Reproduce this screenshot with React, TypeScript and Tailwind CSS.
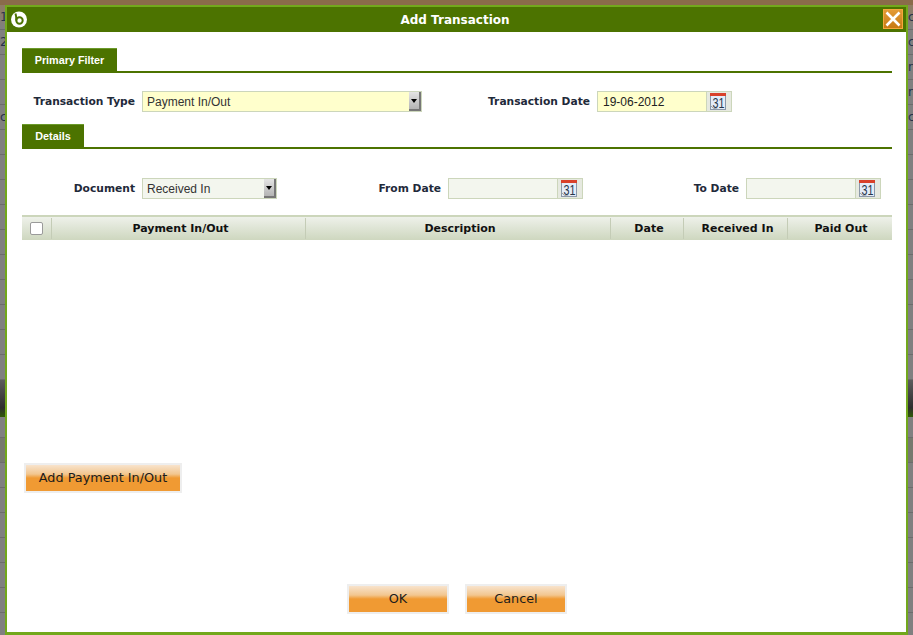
import React from 'react'

const label = "pt-[2px] font-['DejaVu_Sans',sans-serif] text-[10.7px] font-bold text-[#1f2a3a] whitespace-nowrap"

function CalendarIcon() {
  return (
    <svg width="18" height="19" viewBox="0 0 18 19">
      <rect x="1.5" y="2.5" width="15" height="15" fill="#e4ecf8" stroke="#8a97a8" />
      <rect x="1" y="1" width="16" height="3" fill="#d9412a" />
      <path d="M1.5 13.5 q2.5 4 7 3.5" fill="none" stroke="#9aa3ad" />
      <text x="9.5" y="16" textAnchor="middle" fontSize="15" fontFamily="'Liberation Sans', sans-serif" fill="#26364a" textLength="12" lengthAdjust="spacingAndGlyphs">31</text>
    </svg>
  )
}

function DateField({ value, width, bg }: { value?: string; width: string; bg: string }) {
  return (
    <div className={`flex h-[21px] border border-[#ccd6bb] ${width}`}>
      <div className={`flex-1 pl-[5px] font-['Liberation_Sans',sans-serif] text-xs leading-[20px] text-[#222] ${bg}`}>{value}</div>
      <div className="flex w-[25px] items-center justify-center border-l border-[#ccd6bb] bg-[#e6e9e0] pr-[2px]">
        <CalendarIcon />
      </div>
    </div>
  )
}

function SelectField({ value, width, bg }: { value: string; width: string; bg: string }) {
  return (
    <div className={`flex h-[21px] items-center border border-[#ccd6bb] pl-1 ${width} ${bg}`}>
      <span className="flex-1 font-['Liberation_Sans',sans-serif] text-xs text-[#333]">{value}</span>
      <div className="flex h-[19px] w-[12px] items-center justify-center border-r-2 border-b-2 border-[#777] bg-gradient-to-b from-[#e4e4e4] to-[#b4b4b4]">
        <div className="mt-px h-0 w-0 border-x-[3px] border-t-[4px] border-x-transparent border-t-black" />
      </div>
    </div>
  )
}

function Tab({ title, width }: { title: string; width: string }) {
  return (
    <div className="border-b-2 border-[#4c7300]">
      <div className={`flex h-[23px] items-center justify-center border-t border-[#6b9a2a] bg-[#4c7300] pt-px font-['Liberation_Sans',sans-serif] text-[10.8px] font-bold text-white ${width}`}>
        {title}
      </div>
    </div>
  )
}

function OrangeButton({ title, width }: { title: string; width: string }) {
  return (
    <button className={`h-[30px] border-2 border-[#eeeeee] bg-[linear-gradient(#f8e3cc_0%,#f2c68f_35%,#f09a33_50%,#f09a33_100%)] font-['DejaVu_Sans',sans-serif] text-[12.8px] text-[#1c1c1c] ${width}`}>
      {title}
    </button>
  )
}

function HeaderCell({ title, width }: { title: string; width: string }) {
  return (
    <div className={`flex h-[21px] items-center justify-center border-r border-[#c4ccb6] pl-1 pt-[2px] font-['DejaVu_Sans',sans-serif] text-[11px] font-bold text-[#111] ${width}`}>
      {title}
    </div>
  )
}

// rows of the page that shows at the edges, behind the dialog
const topRows = [0, 1, 2, 3, 4, 5, 6, 7, 8, 9, 10, 11, 12, 13, 14]
const bottomRows = [0, 1, 2, 3, 4, 5, 6]

function SideColumn({ texts, right }: { texts: string[]; right?: boolean }) {
  return (
    <div className="flex w-[5px] flex-col overflow-hidden">
      {topRows.map(i => (
        <div key={i} className={`h-[25px] shrink-0 overflow-hidden border-b border-[#6c6c6c] font-['DejaVu_Sans',sans-serif] text-xs leading-[24px] text-[#26324a] ${i === 0 ? 'bg-gradient-to-b from-[#8f7c62] to-[#808080]' : ''} ${right ? '' : 'text-right'}`}>
          {texts[i] ?? ''}
        </div>
      ))}
      <div className="h-[37px] shrink-0 bg-[linear-gradient(#5c5c5c_0%,#2e2e2e_75%,#2f5a05_100%)]" />
      <div className="h-[21px] shrink-0 border-b border-[#6c6c6c]" />
      {bottomRows.map(i => (
        <div key={i} className={`h-[25px] shrink-0 border-b border-[#6c6c6c] ${i === 0 ? 'bg-[#76796e]' : ''}`} />
      ))}
    </div>
  )
}

export default function App() {
  return (
    <div className="relative h-[635px] w-[913px] overflow-hidden bg-[#808080]">
      {/* page behind the dialog */}
      <div className="h-[5px] bg-[#8a6b4a]" />
      <div className="flex h-[630px] justify-between">
        <SideColumn texts={['1', '2', '', '', 'c']} />
        <SideColumn right texts={['c', 'c', 'n', 'n', 'c']} />
      </div>

      {/* dialog */}
      <div className="absolute left-[5px] top-[5px] h-[630px] w-[903px] border-x-2 border-t-2 border-b-[3px] border-[#72a81c] bg-white">
        <div className="relative flex h-[25px] items-center justify-center bg-[#4c7300] pr-[3px] font-['DejaVu_Sans',sans-serif] text-xs font-bold text-white">
          <svg className="absolute left-[3px] top-[3px]" width="18" height="18" viewBox="0 0 18 18">
            <circle cx="9" cy="9.5" r="8" fill="#fff" />
            <circle cx="9.5" cy="10.5" r="3.2" fill="none" stroke="#4c7300" strokeWidth="2" />
            <path d="M6.3 10.5 C6.3 7 6 5 5.5 3.5" fill="none" stroke="#4c7300" strokeWidth="2" />
          </svg>
          Add Transaction
          <div className="absolute right-[3px] top-[2px] flex h-[20px] w-[20px] items-center justify-center border border-[#f6a83c] bg-gradient-to-b from-[#e39a35] to-[#c77a12]">
            <svg width="18" height="18" viewBox="0 0 18 18">
              <path d="M2.5 2.5 L15.5 15.5 M15.5 2.5 L2.5 15.5" stroke="#fff" strokeWidth="2.6" />
            </svg>
          </div>
        </div>

        <div className="pl-[15px] pr-[14px]">
          <div className="mt-4">
            <Tab title="Primary Filter" width="w-[95px]" />
          </div>

          <div className="mt-[18px] flex items-center">
            <div className={`w-[120px] pr-[7px] text-right ${label}`}>Transaction Type</div>
            <SelectField value="Payment In/Out" width="w-[280px]" bg="bg-[#ffffcc]" />
            <div className={`w-[175px] pr-[7px] text-right ${label}`}>Transaction Date</div>
            <DateField value="19-06-2012" width="w-[135px]" bg="bg-[#ffffcc]" />
          </div>

          <div className="mt-3">
            <Tab title="Details" width="w-[62px]" />
          </div>

          <div className="mt-[29px] flex items-center">
            <div className={`w-[120px] pr-[7px] text-right ${label}`}>Document</div>
            <SelectField value="Received In" width="w-[135px]" bg="bg-[#f3f6ee]" />
            <div className={`w-[171px] pr-[7px] text-right ${label}`}>From Date</div>
            <DateField width="w-[135px]" bg="bg-[#f3f6ee]" />
            <div className={`w-[163px] pr-[7px] text-right ${label}`}>To Date</div>
            <DateField width="w-[135px]" bg="bg-[#f3f6ee]" />
          </div>

          <div className="mt-4 flex h-[25px] items-center border-t-2 border-[#ccd6bb] bg-gradient-to-b from-[#eef1ea] to-[#ced7bf]">
            <div className="flex h-[21px] w-[30px] items-center justify-center border-r border-[#c4ccb6]">
              <div className="h-[13px] w-[13px] rounded-[2px] border border-[#9a9a9a] bg-white" />
            </div>
            <HeaderCell title="Payment In/Out" width="w-[254px]" />
            <HeaderCell title="Description" width="w-[305px]" />
            <HeaderCell title="Date" width="w-[73px]" />
            <HeaderCell title="Received In" width="w-[104px]" />
            <div className="flex flex-1 items-center justify-center pl-[2px] pt-[2px] font-['DejaVu_Sans',sans-serif] text-[11px] font-bold text-[#111]">Paid Out</div>
          </div>

          <div className="ml-[2px] mt-[223px]">
            <OrangeButton title="Add Payment In/Out" width="w-[158px]" />
          </div>

          <div className="mt-[91px] flex justify-center gap-4">
            <OrangeButton title="OK" width="w-[102px]" />
            <OrangeButton title="Cancel" width="w-[102px]" />
          </div>
        </div>
      </div>
    </div>
  )
}
